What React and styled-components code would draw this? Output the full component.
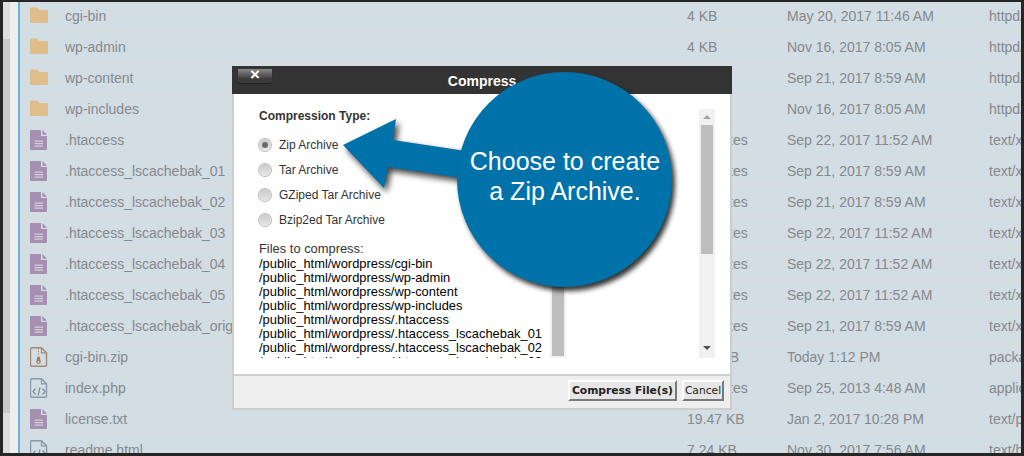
import React from 'react'
import styled, { createGlobalStyle } from 'styled-components'

const GlobalStyle = createGlobalStyle`
  html, body {
    margin: 0;
    padding: 0;
    background: #222;
    overflow: hidden;
  }
  body {
    font-family: "Liberation Sans", Arial, sans-serif;
  }
`

const Frame = styled.div`
  position: relative;
  display: flex;
  width: 1024px;
  height: 456px;
  box-sizing: border-box;
  border: 3px solid #262626;
  border-top-width: 2px;
  overflow: hidden;
  background: #d2dde4;
`

const Gutter = styled.div`
  display: flex;
  flex: 0 0 15px;
  background: #eeeeee;
`

const ScrollTrack = styled.div`
  width: 7px;
  background: #dedede;
`

const ScrollThumb = styled.div`
  height: 374px;
  margin-top: 37px;
  background: #c9c9c9;
`

const List = styled.div`
  flex: 1;
  margin-top: -1px;
  border-left: 2px solid #6cb2d8;
  min-width: 0;
`

const Row = styled.div`
  display: grid;
  grid-template-columns: 35px 622px 100px 202px 1fr;
  align-items: center;
  box-sizing: border-box;
  height: 31px;
  padding-left: 10px;
  border-bottom: 1px solid #dbd9d6;
  color: #86898d;
  font-size: 14px;
  white-space: nowrap;
  overflow: hidden;
`

const Cell = styled.span`
  overflow: hidden;
`

const IconSvg = styled.svg`
  display: block;
  width: 18px;
  height: 20px;
`

const FolderIcon = () => (
  <IconSvg viewBox="0 0 18 20">
    <path fill="#dfbe8a" d="M1.5 1.5h5.2c.6 0 1 .3 1.3.8l1 1.7h7.5c.8 0 1.5.7 1.5 1.5v10c0 .8-.7 1.5-1.5 1.5H1.500c-.8 0-1.500-.7-1.500-1.500V3c0-.8.700-1.500 1.500-1.500z" />
  </IconSvg>
)

const TextIcon = () => (
  <IconSvg viewBox="0 0 18 20">
    <path fill="#a68fb0" d="M1 0h10v6h6v13c0 .6-.4 1-1 1H1c-.6 0-1-.4-1-1V1c0-.6.4-1 1-1z" />
    <path fill="#9d90b2" d="M12.500 0L17 4.800h-4.500z" />
    <path fill="#d2d0dc" d="M4.500 10.500h8.500v1.300H4.500zM4.500 13h8.500v1.300H4.500zM4.500 15.500h8.500v1.300H4.500z" />
  </IconSvg>
)

const ZipIcon = () => (
  <IconSvg viewBox="0 0 18 20">
    <path fill="none" stroke="#a48a72" strokeWidth="1.400" d="M1.500.7h10l5 5v12.600c0 .6-.4 1-1 1h-14c-.6 0-1-.4-1-1V1.700c0-.6.400-1 1-1z" />
    <path fill="none" stroke="#a48a72" strokeWidth="1.200" d="M11.500 1v4.800h5" />
    <path fill="none" stroke="#a48a72" strokeWidth="1" strokeDasharray="1.500 1.200" d="M8.500 1v8" />
    <path fill="#a57f56" d="M7.500 9.500h2l1.300 5.200a2.300 2.300 0 1 1-4.600 0z" />
    <circle cx="8.500" cy="15" r="1" fill="#d2dde4" />
  </IconSvg>
)

const CodeIcon = () => (
  <IconSvg viewBox="0 0 18 20">
    <path fill="none" stroke="#8b98a8" strokeWidth="1.400" d="M1.500.7h10l5 5v12.600c0 .6-.4 1-1 1h-14c-.6 0-1-.4-1-1V1.700c0-.6.400-1 1-1z" />
    <path fill="none" stroke="#8b98a8" strokeWidth="1.200" d="M11.500 1v4.800h5" />
    <path fill="none" stroke="#7f8ea0" strokeWidth="1.200" d="M5.500 10.500L3 13.500l2.500 3M12.500 10.500l2.500 3-2.500 3M10 9.500l-2 8" />
  </IconSvg>
)

const icons = { folder: FolderIcon, text: TextIcon, zip: ZipIcon, code: CodeIcon }

const dir = 'httpd/unix-directory'
const txt = 'text/x-generic'

const files = [
  ['folder', 'cgi-bin', '4 KB', 'May 20, 2017 11:46 AM', dir],
  ['folder', 'wp-admin', '4 KB', 'Nov 16, 2017 8:05 AM', dir],
  ['folder', 'wp-content', '4 KB', 'Sep 21, 2017 8:59 AM', dir],
  ['folder', 'wp-includes', '4 KB', 'Nov 16, 2017 8:05 AM', dir],
  ['text', '.htaccess', '547 bytes', 'Sep 22, 2017 11:52 AM', txt],
  ['text', '.htaccess_lscachebak_01', '547 bytes', 'Sep 21, 2017 8:59 AM', txt],
  ['text', '.htaccess_lscachebak_02', '547 bytes', 'Sep 21, 2017 8:59 AM', txt],
  ['text', '.htaccess_lscachebak_03', '547 bytes', 'Sep 22, 2017 11:52 AM', txt],
  ['text', '.htaccess_lscachebak_04', '547 bytes', 'Sep 22, 2017 11:52 AM', txt],
  ['text', '.htaccess_lscachebak_05', '547 bytes', 'Sep 22, 2017 11:52 AM', txt],
  ['text', '.htaccess_lscachebak_orig', '547 bytes', 'Sep 21, 2017 8:59 AM', txt],
  ['zip', 'cgi-bin.zip', '1.58 MB', 'Today 1:12 PM', 'package/x-generic'],
  ['code', 'index.php', '418 bytes', 'Sep 25, 2013 4:48 AM', 'application/x-httpd-php'],
  ['text', 'license.txt', '19.47 KB', 'Jan 2, 2017 10:28 PM', 'text/plain'],
  ['code', 'readme.html', '7.24 KB', 'Nov 30, 2017 7:56 AM', 'text/html'],
]

const Modal = styled.div`
  position: absolute;
  left: 229px;
  top: 64px;
  display: flex;
  flex-direction: column;
  width: 500px;
  height: 344px;
`

const TitleBar = styled.div`
  display: grid;
  grid-template-columns: 1fr auto 1fr;
  align-items: center;
  flex: 0 0 28px;
  padding: 3px 6px 0;
  box-sizing: border-box;
  background: #333333;
  color: #fff;
  font-size: 14px;
  font-weight: 700;
`

const Title = styled.span`
  margin-top: -2px;
`

const CloseButton = styled.div`
  justify-self: start;
  align-self: start;
  width: 34px;
  height: 14px;
  line-height: 12px;
  border-radius: 0 0 3px 3px;
  background: linear-gradient(#8a8a8a, #3c3a3a 70%);
  box-shadow: 0 1px 1px #1b1f24;
  text-align: center;
  font-size: 17px;
`

const Panel = styled.div`
  display: flex;
  flex-direction: column;
  flex: 1;
  min-height: 0;
  border: 2px solid #cdcdcd;
  border-top: 0;
`

const Body = styled.div`
  display: flex;
  flex: 0 0 280px;
  min-height: 0;
  overflow: hidden;
  box-sizing: border-box;
  padding: 15px 0 16px 25px;
  background: #fff;
`

const Content = styled.div`
  display: flex;
  flex-direction: column;
  flex: 0 0 440px;
  min-height: 0;
`

const TypeHeading = styled.div`
  color: #333;
  font-size: 12px;
  font-weight: 700;
  line-height: 14px;
`

const RadioGroup = styled.div`
  margin-top: 9px;
`

const RadioRow = styled.div`
  display: flex;
  align-items: center;
  gap: 8px;
  height: 25px;
  color: #333;
  font-size: 12px;
`

const Radio = styled.span`
  display: flex;
  align-items: center;
  justify-content: center;
  width: 12px;
  height: 12px;
  border-radius: 50%;
  background: linear-gradient(#c9c9c9, #e6e6e6);
  box-shadow: 0 0 0 1px #bdbdbd;

  &::after {
    content: "";
    width: 6px;
    height: 6px;
    border-radius: 50%;
    background: ${p => (p.$checked ? '#6a6a6a' : 'transparent')};
  }
`

const FilesLabel = styled.div`
  margin-top: 10px;
  color: #333;
  font-size: 12.9px;
  line-height: 14px;
`

const FilesBox = styled.div`
  display: flex;
  flex: 1;
  min-height: 0;
  width: 307px;
  overflow: hidden;
`

const FilePaths = styled.div`
  flex: 1;
  padding-top: 1px;
  color: #000;
  font-size: 12.9px;
  line-height: 14px;
  white-space: nowrap;
`

const Track = styled.div`
  display: flex;
  flex-direction: column;
  align-items: center;
  box-sizing: border-box;
  width: ${p => p.$width}px;
  padding: 0 2px 2px;
  background: #f1f1f1;
`

const Thumb = styled.div`
  flex: 1;
  align-self: stretch;
  background: #bdbdbd;
`

const OuterThumb = styled.div`
  align-self: stretch;
  height: 129px;
  background: #bdbdbd;
`

const ArrowCap = styled.div`
  flex: 0 0 16px;
  display: flex;
  align-items: center;
  justify-content: center;
`

const Triangle = styled.span`
  width: 0;
  height: 0;
  border-left: 4px solid transparent;
  border-right: 4px solid transparent;
  border-${p => (p.$up ? 'bottom' : 'top')}: 4px solid ${p => (p.$up ? '#a3a3a3' : '#505050')};
`

const Spacer = styled.div`
  flex: 1;
`

const Footer = styled.div`
  display: flex;
  justify-content: flex-end;
  gap: 5px;
  flex: 1;
  padding: 4px 6px 0 0;
  border-top: 2px solid #cfcfcf;
  background: #eeeeee;
`

const Button = styled.div`
  box-sizing: border-box;
  width: ${p => p.$width}px;
  height: 21px;
  line-height: 17px;
  text-align: center;
  border: 2px solid;
  border-color: #fff #7a7a7a #7a7a7a #fff;
  background: #e6e6e6;
  color: #222;
  font-family: "DejaVu Sans", Verdana, sans-serif;
  font-size: 10.7px;
  font-weight: ${p => (p.$primary ? 700 : 400)};
`

const Arrow = styled.svg`
  position: absolute;
  left: 337px;
  top: 108px;
  width: 130px;
  height: 90px;
  overflow: visible;
  filter: drop-shadow(3px 4px 3px rgba(0, 0, 0, 0.75));
`

const Bubble = styled.div`
  position: absolute;
  left: 454px;
  top: 70px;
  display: flex;
  align-items: center;
  justify-content: center;
  box-sizing: border-box;
  width: 215px;
  height: 215px;
  padding: 0 0 8px 1px;
  border-radius: 50%;
  background: #0072aa;
  box-shadow: 3px 4px 5px rgba(0, 0, 0, 0.8);
  color: #fff;
  font-size: 25px;
  line-height: 30px;
  text-align: center;
`

const compressTypes = ['Zip Archive', 'Tar Archive', 'GZiped Tar Archive', 'Bzip2ed Tar Archive']

const base = '/public_html/wordpress/'
const paths = ['cgi-bin', 'wp-admin', 'wp-content', 'wp-includes', '.htaccess', '.htaccess_lscachebak_01', '.htaccess_lscachebak_02', '.htaccess_lscachebak_03']

function App() {
  return (
    <Frame>
      <GlobalStyle />
      <Gutter>
        <ScrollTrack>
          <ScrollThumb />
        </ScrollTrack>
      </Gutter>
      <List>
        {files.map(([kind, name, size, date, type]) => {
          const Icon = icons[kind]
          return (
            <Row key={name}>
              <Icon />
              <Cell>{name}</Cell>
              <Cell>{size}</Cell>
              <Cell>{date}</Cell>
              <Cell>{type}</Cell>
            </Row>
          )
        })}
      </List>

      <Modal>
        <TitleBar>
          <CloseButton>×</CloseButton>
          <Title>Compress</Title>
        </TitleBar>
        <Panel>
          <Body>
            <Content>
              <TypeHeading>Compression Type:</TypeHeading>
              <RadioGroup>
                {compressTypes.map((t, i) => (
                  <RadioRow key={t}>
                    <Radio $checked={i === 0} />
                    {t}
                  </RadioRow>
                ))}
              </RadioGroup>
              <FilesLabel>Files to compress:</FilesLabel>
              <FilesBox>
                <FilePaths>
                  {paths.map(p => (
                    <div key={p}>{base + p}</div>
                  ))}
                </FilePaths>
                <Track $width={16}>
                  <Thumb />
                </Track>
              </FilesBox>
            </Content>
            <Track $width={16}>
              <ArrowCap>
                <Triangle $up />
              </ArrowCap>
              <OuterThumb />
              <Spacer />
              <ArrowCap>
                <Triangle />
              </ArrowCap>
            </Track>
          </Body>
          <Footer>
            <Button $primary $width={109}>Compress File(s)</Button>
            <Button $width={42}>Cancel</Button>
          </Footer>
        </Panel>
      </Modal>

      <Arrow viewBox="340 110 130 90">
        <path fill="#0072aa" d="M343 145L396 119L393 140L466 151L462 178L388 167L384 188Z" />
      </Arrow>
      <Bubble>
        Choose to create
        <br />
        a Zip Archive.
      </Bubble>
    </Frame>
  )
}

export default App
